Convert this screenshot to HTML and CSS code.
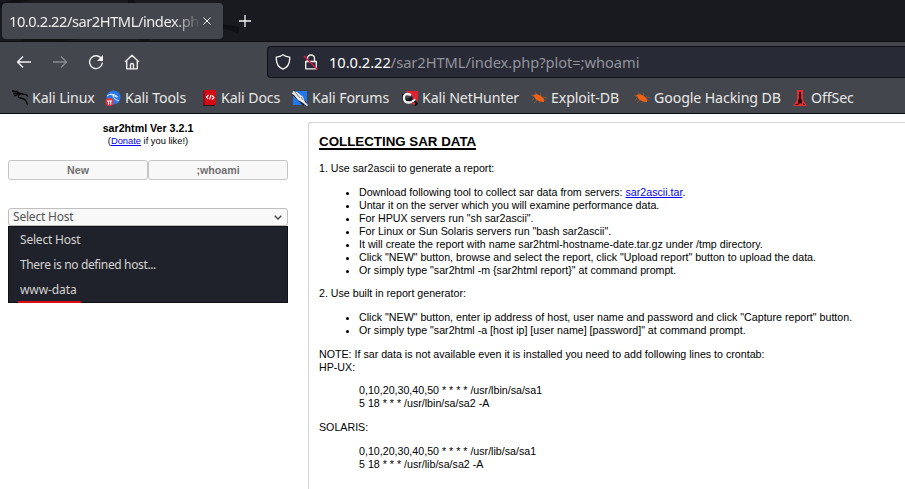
FILE: index.html
```
<!DOCTYPE html>
<html lang="en">
<head>
<meta charset="utf-8">
<title>10.0.2.22/sar2HTML/index.php</title>
<link rel="stylesheet" href="styles.css">
</head>
<body>
<header class="chrome">
  <div class="tabs">
    <svg class="dragon" width="300" height="41" viewBox="0 0 300 41"><path d="M20 41Q36 31 80 39L60 41zM135 0Q140 20 150 41H140Q126 20 128 0zM0 3Q14 -2 32 0L0 8zM222 24L239 27 238 34 232 31Q228 29 222 29z"/></svg>
    <div class="tab"><span class="tab-title">10.0.2.22/sar2HTML/index.ph</span>
      <svg class="close" width="8" height="8" viewBox="0 0 8 8"><path d="M.5 .5l7 7M7.5 .5l-7 7"/></svg></div>
    <svg class="plus" width="12" height="12" viewBox="0 0 12 12"><path d="M6 0v12M0 6h12"/></svg>
  </div>
  <nav class="toolbar">
    <div class="nav-icons">
      <svg width="16" height="16" viewBox="0 0 16 16"><path d="M15 8H1.5M7 2.5L1.5 8 7 13.5"/></svg>
      <svg class="disabled" width="16" height="16" viewBox="0 0 16 16"><path d="M1 8h13.5M9 2.5L14.500 8 9 13.500"/></svg>
      <svg width="16" height="16" viewBox="0 0 16 16"><path d="M13.600 5A6.400 6.400 0 1 0 14.400 8.500"/><path class="solid" d="M15 1v6H9z"/></svg>
      <svg width="16" height="16" viewBox="0 0 16 16"><path d="M1 8L8 1.300 15 8M2.700 7v7.800h10.600V7M6.500 14.500V11q0-1.500 1.500-1.500T9.500 11v3.500"/></svg>
    </div>
    <div class="urlbar">
      <svg width="16" height="16" viewBox="0 0 16 16"><path d="M8 .8C6 2.300 3.500 3 1.300 3.200 1 8.500 3 13.200 8 15.200c5-2 7-6.700 6.700-12C12.500 3 10 2.300 8 .8z"/></svg>
      <svg width="16" height="16" viewBox="0 0 16 16"><path d="M4.500 7V4.500Q4.500 1 8 1t3.500 3.500V7M2.700 7.500h10.600v7.300H2.700z"/><path class="slash" d="M1 2l13.500 13.500"/></svg>
      <span class="url"><b>10.0.2.22</b>/sar2HTML/index.php?plot=;whoami</span>
    </div>
  </nav>
  <nav class="bookmarks">
    <a><svg width="16" height="16" viewBox="0 0 16 16"><path fill="none" stroke="#060606" stroke-width="1.300" d="M0 1l5 .5 3 2 3 .5M1 3.500l5 0 3 1M2 6l4-1.500M8 4Q4.500 7 8 8q6 0 7.500 7M8 8l4 1 2 1M10 4l4 .5 2 2"/></svg><span>Kali Linux</span></a>
    <a><svg width="16" height="16" viewBox="0 0 16 16"><circle cx="8.500" cy="7.500" r="7" fill="#2878ed"/><path fill="none" stroke="#e9f2ff" stroke-width="1" d="M2 6q5-4 11 1M5 4l7 3M8 6q0 3 6 5"/><circle cx="4.500" cy="12" r="4" fill="#ee3339"/><path stroke="#fff" fill="none" d="M2 11h5M3.500 11v3.500M5.700 11v3.500"/></svg><span>Kali Tools</span></a>
    <a><svg width="14" height="16" viewBox="0 0 14 16"><path fill="#d40b14" d="M1 0h12v15H1z"/><path fill="#8b1020" d="M0 1h2v15H0z"/><path stroke="#17191f" d="M0 15.500h12"/><path fill="none" stroke="#fff" stroke-width="1.100" d="M5.500 5L3.500 7l1.500 2M9 5.500L11 7.500 9 9.500M8 5L6.500 9.500"/></svg><span>Kali Docs</span></a>
    <a><svg width="16" height="16" viewBox="0 0 16 16"><path fill="#2178ef" d="M1 1h14v14H1z"/><path stroke="#17191d" stroke-width="5" d="M1 2l12 12"/><path fill="#e7e7e5" d="M1 1l4 1 6 5 2 5 3 3-1 1-4-3-5-3-4-5-2-1z"/><path stroke="#555" stroke-width=".7" d="M3 2l5 6M9 7l2 3"/></svg><span>Kali Forums</span></a>
    <a><svg width="16" height="16" viewBox="0 0 16 16"><path fill="#df2330" d="M3 1h13v11L9 5z"/><path fill="none" stroke="#16181d" stroke-width="4" d="M2 4q-1 7 4 7l3-2 6 6"/><path fill="none" stroke="#f5f4f5" stroke-width="2.300" d="M9 5Q2 2 2 8t8 4l3-3"/><path stroke="#e32936" stroke-width="2" d="M11 9l3-2M10 13l3 1"/></svg><span>Kali NetHunter</span></a>
    <a><svg width="16" height="16" viewBox="0 0 16 16"><path fill="#ed6215" d="M2 5l4-1 4 2 3 3v3l-4-.5-4-2z"/><path fill="none" stroke="#b35c2e" stroke-width=".6" d="M0 5l4 2M4 2l2 3M9 3l1 3M12 7l4 1M12 9l3 2M3 8l-2 3M6 10l-3 3M9 11l-1 2"/></svg><span>Exploit-DB</span></a>
    <a><svg width="16" height="16" viewBox="0 0 16 16"><path fill="#ed6215" d="M2 5l4-1 4 2 3 3v3l-4-.5-4-2z"/><path fill="none" stroke="#b35c2e" stroke-width=".6" d="M0 5l4 2M4 2l2 3M9 3l1 3M12 7l4 1M12 9l3 2M3 8l-2 3M6 10l-3 3M9 11l-1 2"/></svg><span>Google Hacking DB</span></a>
    <a><svg width="14" height="16" viewBox="0 0 14 16"><path fill="#e52c30" d="M4 0h6v10l4 6H0l4-6z"/><path fill="#27090d" d="M6 2h2v6l1 3v3l-2-1-2 2v-4l1-3zM3 14h2v1H2zM10 13l2 2h-2z"/></svg><span>OffSec</span></a>
  </nav>
</header>
<main class="page">
  <aside class="side">
    <h1>sar2html Ver 3.2.1</h1>
    <p class="donate">(<a href="#">Donate</a> if you like!)</p>
    <div class="buttons"><button>New</button><button>;whoami</button></div>
    <div class="select"><span>Select Host</span><svg width="8" height="5" viewBox="0 0 8 5"><path d="M.7 .7L4 4 7.300 .7"/></svg></div>
    <ul class="options"><li class="wide">Select Host</li><li>There is no defined host...</li><li class="marked">www-data</li></ul>
  </aside>
  <article class="content">
    <h2>COLLECTING SAR DATA</h2>
    <p>1. Use sar2ascii to generate a report:</p>
    <ul>
      <li>Download following tool to collect sar data from servers: <a href="#">sar2ascii.tar</a>.</li>
      <li>Untar it on the server which you will examine performance data.</li>
      <li>For HPUX servers run "sh sar2ascii".</li>
      <li>For Linux or Sun Solaris servers run "bash sar2ascii".</li>
      <li>It will create the report with name sar2html-hostname-date.tar.gz under /tmp directory.</li>
      <li>Click "NEW" button, browse and select the report, click "Upload report" button to upload the data.</li>
      <li>Or simply type "sar2html -m {sar2html report}" at command prompt.</li>
    </ul>
    <p>2. Use built in report generator:</p>
    <ul>
      <li>Click "NEW" button, enter ip address of host, user name and password and click "Capture report" button.</li>
      <li>Or simply type "sar2html -a [host ip] [user name] [password]" at command prompt.</li>
    </ul>
    <p>NOTE: If sar data is not available even it is installed you need to add following lines to crontab:<br>HP-UX:</p>
    <p class="cron">0,10,20,30,40,50 * * * * /usr/lbin/sa/sa1<br>5 18 * * * /usr/lbin/sa/sa2 -A</p>
    <p>SOLARIS:</p>
    <p class="cron">0,10,20,30,40,50 * * * * /usr/lib/sa/sa1<br>5 18 * * * /usr/lib/sa/sa2 -A</p>
  </article>
</main>
</body>
</html>
```
FILE: styles.css
```
* { box-sizing: border-box; }
body { margin: 0; height: 489px; overflow: hidden; background: #fff; color: #000; font: 10.667px/13px "Liberation Sans", sans-serif; }
a { color: #0000ee; }
.chrome { height: 114px; background: #44464e; border-bottom: 1px solid #08080a; color: #eeeeec; font-family: "Noto Sans", sans-serif; }
.chrome svg { flex: none; }
.tabs { position: relative; display: flex; align-items: center; height: 42px; padding-left: 2px; background: #191a1f; border-bottom: 1px solid #0c0d10; }
.dragon { position: absolute; left: 0; top: 0; fill: #101115; }
.tab { position: relative; display: flex; align-items: center; width: 221px; height: 36px; padding-left: 7px; background: #44464e; border-radius: 4px; }
.tab-title { width: 192px; white-space: nowrap; font-size: 14.667px; line-height: 22px; letter-spacing: -.46px; -webkit-mask-image: linear-gradient(90deg, #000 85%, transparent); mask-image: linear-gradient(90deg, #000 85%, transparent); }
.close { margin-left: 2px; fill: none; stroke: #eee; }
.plus { position: relative; margin-left: 16px; stroke: #f4f4f4; stroke-width: 1.3; }
.toolbar { display: flex; height: 40px; padding-left: 16px; }
.nav-icons { display: flex; align-items: center; gap: 20px; width: 251px; }
.toolbar svg { fill: none; stroke: #f1f1f1; stroke-width: 1.35; stroke-linejoin: round; }
.toolbar .disabled { stroke: #898a90; }
.toolbar .solid { fill: #f1f1f1; stroke: none; }
.toolbar .slash { stroke: #e01849; }
.urlbar { display: flex; flex: 1; align-items: center; gap: 12px; height: 32px; margin-top: 4px; padding-left: 7px; background: #282a36; border: 1px solid #101116; border-right: 0; border-radius: 4px 0 0 4px; }
.url { margin-left: -2px; color: #93949c; font-size: 14.667px; letter-spacing: -.04px; white-space: nowrap; }
.url b { color: #fff; font-weight: 400; }
.bookmarks { display: grid; grid-template-columns: 93px 98px 89px 110px 129px 103px 159px 80px; height: 31px; padding-left: 12px; font-size: 14.2px; letter-spacing: -.12px; }
.bookmarks a { display: flex; align-items: center; gap: 4px; color: #e8e8e6; white-space: nowrap; }
.page { display: grid; grid-template-columns: 280px 1fr; gap: 20px; height: 375px; padding: 8px 0 0 8px; }
.side { text-align: center; }
h1 { margin: 0; font-size: 10.667px; line-height: 13px; }
.donate { margin: 0; font-size: 9.333px; line-height: 12px; }
.buttons { display: grid; grid-template-columns: 1fr 1fr; margin-top: 13px; }
.buttons button { height: 20px; padding: 0; background: #f8f8f8; border: 1px solid #c5c5c5; border-radius: 3px; color: #707070; font: bold 10.667px/16px "Liberation Sans", sans-serif; }
.select { display: flex; align-items: center; justify-content: space-between; height: 18px; margin-top: 28px; padding: 0 5px 0 4px; background: #f8f8f8; border: 1px solid #bfbfbf; border-radius: 3px; color: #555; font: 12px/16px "Noto Sans", sans-serif; letter-spacing: -.2px; }
.select svg { fill: none; stroke: #444; stroke-width: 1.4; }
.options { height: 77px; margin: 0; padding: 0 11px 1px; background: #20222b; border: 1px solid #101116; list-style: none; color: #d4d4d2; font: 12px/25px "Noto Sans", sans-serif; letter-spacing: -.36px; text-align: left; }
.options li { height: 25px; white-space: nowrap; }
.options .wide { letter-spacing: -.2px; }
.options .marked { position: relative; letter-spacing: -.1px; }
.marked::after { content: ""; position: absolute; left: -2px; bottom: -1px; width: 63px; height: 2px; background: #e00b12; }
.content { height: 367px; overflow: hidden; padding: 11px 10px 0; border: 1px solid #d3d3d3; border-width: 1px 0 0 1px; border-radius: 3px 0 0; }
.content > * { margin: 0 0 10.667px; }
.content > :last-child { margin-bottom: 0; }
.content h2 { width: max-content; height: 16px; margin-bottom: 12px; border-bottom: 2px solid #000; font-size: 13.333px; line-height: 15px; }
.content ul { padding-left: 40px; }
.cron { padding-left: 40px; }
```
